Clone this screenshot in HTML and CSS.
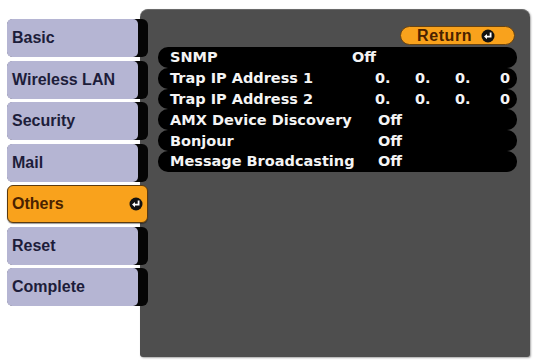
FILE: index.html
```html
<!DOCTYPE html>
<html lang="en">
<head>
    <meta charset="UTF-8">
    <title>Network - Others</title>
    <link rel="stylesheet" href="styles.css">
</head>
<body>
    <div class="screen">
        <div class="menu">
            <div class="tab"><span class="label">Basic</span></div>
            <div class="tab"><span class="label">Wireless LAN</span></div>
            <div class="tab"><span class="label">Security</span></div>
            <div class="tab"><span class="label">Mail</span></div>
            <div class="tab active">
                <span class="label">Others</span>
                <svg class="enter" viewBox="0 0 14 14"><circle cx="7" cy="7" r="6.5" fill="#111"/><path d="M9.6 3.6V7.6H5.4" stroke="#fff" stroke-width="1.8" fill="none"/><path d="M3 7.6L6 5V10.2Z" fill="#fff"/></svg>
            </div>
            <div class="tab"><span class="label">Reset</span></div>
            <div class="tab"><span class="label">Complete</span></div>
        </div>

        <div class="panel">
            <div class="toolbar">
                <div class="return">
                    Return
                    <svg class="enter" viewBox="0 0 14 14"><circle cx="7" cy="7" r="6.5" fill="#111"/><path d="M9.6 3.6V7.6H5.4" stroke="#fff" stroke-width="1.8" fill="none"/><path d="M3 7.6L6 5V10.2Z" fill="#fff"/></svg>
                </div>
            </div>
            <div class="rows">
                <div class="row"><span class="name short">SNMP</span><span class="value">Off</span></div>
                <div class="row"><span class="name">Trap IP Address 1</span><span class="ip">0.</span><span class="ip">0.</span><span class="ip wide">0.</span><span class="ip">0</span></div>
                <div class="row"><span class="name">Trap IP Address 2</span><span class="ip">0.</span><span class="ip">0.</span><span class="ip wide">0.</span><span class="ip">0</span></div>
                <div class="row"><span class="name">AMX Device Discovery</span><span class="value">Off</span></div>
                <div class="row"><span class="name">Bonjour</span><span class="value">Off</span></div>
                <div class="row"><span class="name">Message Broadcasting</span><span class="value">Off</span></div>
            </div>
        </div>
    </div>
</body>
</html>
```

FILE: styles.css
```css
body {
    margin: 0;
    background: #ffffff;
    font-family: "DejaVu Sans", Verdana, sans-serif;
}
.screen {
    display: flex;
    align-items: flex-start;
    width: 534px;
    height: 362px;
    padding: 9px 0 0 7px;
    box-sizing: border-box;
}
.menu {
    display: flex;
    flex-direction: column;
    gap: 3.5px;
    margin-top: 10px;
    position: relative;
    z-index: 1;
}
.tab {
    display: flex;
    width: 141px;
    height: 38px;
    background: #050505;
    border-radius: 6px;
}
.tab .label {
    display: flex;
    align-items: center;
    width: 131px;
    padding-left: 5px;
    box-sizing: border-box;
    background: #b5b5d3;
    border-radius: 5px;
    color: #1d1d3a;
    font-family: "Liberation Sans", Arial, sans-serif;
    font-size: 16px;
    font-weight: bold;
}
.tab.active {
    align-items: center;
    background: #f9a21c;
    border: 1px solid #5a3a10;
    box-sizing: border-box;
    box-shadow: 0 1px 1px rgba(0,0,0,0.4);
}
.tab.active .label {
    flex: 1;
    padding-left: 4px;
    background: none;
    color: #4a2200;
}
.tab.active .enter {
    margin-right: 4px;
}
.enter {
    width: 14px;
    height: 14px;
    flex-shrink: 0;
}
.panel {
    width: 390px;
    height: 348px;
    margin-left: -8px;
    background: #4e4e4e;
    border-radius: 8px 8px 3px 3px;
    border-top: 1px solid #6a6a6a;
    box-shadow: 1px 1px 2px rgba(0,0,0,0.35);
    box-sizing: border-box;
    padding: 16px 13px 0 18px;
}
.toolbar {
    display: flex;
    justify-content: flex-end;
    padding-right: 2px;
}
.return {
    display: flex;
    align-items: center;
    gap: 9px;
    width: 115px;
    height: 19px;
    box-sizing: border-box;
    padding: 0 17px 0 16px;
    background: #f9a21c;
    border: 1px solid #6a4410;
    border-radius: 10px;
    color: #4a2200;
    font-family: "Liberation Sans", Arial, sans-serif;
    font-size: 16px;
    font-weight: bold;
    letter-spacing: 0.6px;
}
.rows {
    display: flex;
    flex-direction: column;
    margin-top: 2px;
}
.row {
    display: flex;
    align-items: center;
    height: 20.8px;
    padding-left: 12px;
    background: #000;
    border-radius: 10px;
    color: #f4f4f4;
    font-size: 14.5px;
    font-weight: bold;
}
.row span {
    flex-shrink: 0;
}
.name {
    width: 205px;
    white-space: nowrap;
}
.name.short {
    width: 182px;
}
.value {
    margin-left: 3px;
}
.name.short + .value {
    margin-left: 0;
}
.ip {
    width: 40px;
}
.ip.wide {
    width: 45px;
}
```
